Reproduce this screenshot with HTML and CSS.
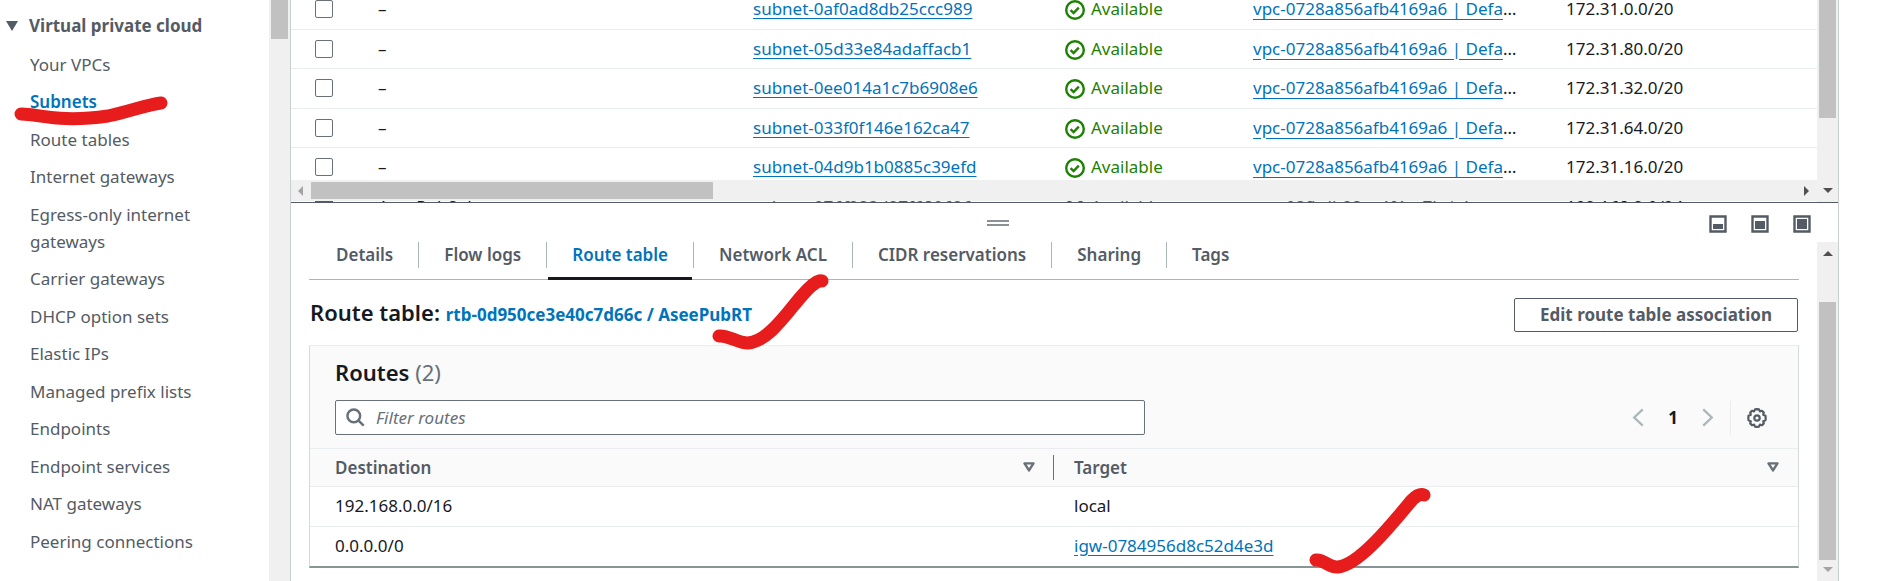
FILE: index.html
```
<!DOCTYPE html>
<html lang="en">
<head>
<meta charset="utf-8">
<title>Subnets | VPC Console</title>
<link rel="stylesheet" href="styles.css">
</head>
<body>
<svg class="defs" aria-hidden="true">
  <symbol id="i-ok" viewBox="0 0 20 20"><circle cx="10" cy="10" r="8.8" fill="none" stroke="currentColor" stroke-width="2.4"/><path d="M5.6 10.2l3 2.9 5.2-5.4" fill="none" stroke="currentColor" stroke-width="2.4"/></symbol>
  <symbol id="i-sort" viewBox="0 0 12 10"><path d="M1.5 1.4h9L6 8.4z" fill="none" stroke="currentColor" stroke-width="2.4" stroke-linejoin="round"/></symbol>
</svg>
<div class="app">
  <nav class="side">
    <div class="side-body">
      <h3 class="side-title"><span class="caret"></span>Virtual private cloud</h3>
      <ul class="side-list">
        <li><a href="#">Your VPCs</a></li>
        <li class="current"><a href="#">Subnets</a>
          <svg class="mark mark-under" viewBox="0 0 160 36"><path d="M13 20C32 20 50 29 100 22C120 18 138 11 153 9"/></svg></li>
        <li><a href="#">Route tables</a></li>
        <li><a href="#">Internet gateways</a></li>
        <li><a href="#">Egress-only internet gateways</a></li>
        <li><a href="#">Carrier gateways</a></li>
        <li><a href="#">DHCP option sets</a></li>
        <li><a href="#">Elastic IPs</a></li>
        <li><a href="#">Managed prefix lists</a></li>
        <li><a href="#">Endpoints</a></li>
        <li><a href="#">Endpoint services</a></li>
        <li><a href="#">NAT gateways</a></li>
        <li><a href="#">Peering connections</a></li>
      </ul>
    </div>
    <div class="vbar"><span class="thumb thumb-side"></span></div>
  </nav>

  <main class="main">
    <section class="subnets">
      <div class="subnets-view">
        <table class="grid">
          <colgroup><col class="c-check"><col class="c-name"><col class="c-id"><col class="c-state"><col class="c-vpc"><col></colgroup>
          <tbody>
            <tr><td><input type="checkbox" aria-label="Select subnet-0af0ad8db25ccc989"></td><td>–</td><td><a href="#">subnet-0af0ad8db25ccc989</a></td><td class="ok"><svg><use href="#i-ok"/></svg>Available</td><td class="vpc"><a href="#">vpc-0728a856afb4169a6 | DefaultVPC</a></td><td>172.31.0.0/20</td></tr>
            <tr><td><input type="checkbox" aria-label="Select subnet-05d33e84adaffacb1"></td><td>–</td><td><a href="#">subnet-05d33e84adaffacb1</a></td><td class="ok"><svg><use href="#i-ok"/></svg>Available</td><td class="vpc"><a href="#">vpc-0728a856afb4169a6 | DefaultVPC</a></td><td>172.31.80.0/20</td></tr>
            <tr><td><input type="checkbox" aria-label="Select subnet-0ee014a1c7b6908e6"></td><td>–</td><td><a href="#">subnet-0ee014a1c7b6908e6</a></td><td class="ok"><svg><use href="#i-ok"/></svg>Available</td><td class="vpc"><a href="#">vpc-0728a856afb4169a6 | DefaultVPC</a></td><td>172.31.32.0/20</td></tr>
            <tr><td><input type="checkbox" aria-label="Select subnet-033f0f146e162ca47"></td><td>–</td><td><a href="#">subnet-033f0f146e162ca47</a></td><td class="ok"><svg><use href="#i-ok"/></svg>Available</td><td class="vpc"><a href="#">vpc-0728a856afb4169a6 | DefaultVPC</a></td><td>172.31.64.0/20</td></tr>
            <tr><td><input type="checkbox" aria-label="Select subnet-04d9b1b0885c39efd"></td><td>–</td><td><a href="#">subnet-04d9b1b0885c39efd</a></td><td class="ok"><svg><use href="#i-ok"/></svg>Available</td><td class="vpc"><a href="#">vpc-0728a856afb4169a6 | DefaultVPC</a></td><td>172.31.16.0/20</td></tr>
            <tr><td><input type="checkbox" checked aria-label="Select AseePubSub"></td><td>AseePubSub</td><td><a href="#">subnet-076f233d27f680626</a></td><td class="ok"><svg><use href="#i-ok"/></svg>Available</td><td class="vpc"><a href="#">vpc-03fbdb23ce4f4ac7b | AseeVPC</a></td><td>192.168.2.0/24</td></tr>
          </tbody>
        </table>
        <div class="hbar"><span class="arrow left dim"></span><span class="thumb thumb-h"></span><span class="arrow right"></span></div>
      </div>
      <div class="vbar vbar-top"><span class="thumb"></span><span class="arrow down"></span></div>
    </section>

    <section class="panel">
      <header class="panel-head">
        <span class="handle"></span>
        <div class="sizes">
          <button type="button" aria-label="Small panel"><svg viewBox="0 0 18 18"><path d="M1.5 1.5h15v15h-15z" fill="none" stroke="currentColor" stroke-width="2.4"/><path d="M4 9h10v5H4z" fill="currentColor"/></svg></button>
          <button type="button" aria-label="Medium panel"><svg viewBox="0 0 18 18"><path d="M1.5 1.5h15v15h-15z" fill="none" stroke="currentColor" stroke-width="2.4"/><path d="M4 6h10v8H4z" fill="currentColor"/></svg></button>
          <button type="button" aria-label="Full panel"><svg viewBox="0 0 18 18"><path d="M1.5 1.5h15v15h-15z" fill="none" stroke="currentColor" stroke-width="2.4"/><path d="M4 4h10v10H4z" fill="currentColor"/></svg></button>
        </div>
      </header>
      <div class="panel-row">
        <div class="panel-body">
          <div class="tabs" role="tablist">
            <button type="button" role="tab">Details</button>
            <button type="button" role="tab">Flow logs</button>
            <button type="button" role="tab" class="active" aria-selected="true">Route table</button>
            <button type="button" role="tab">Network ACL</button>
            <button type="button" role="tab">CIDR reservations</button>
            <button type="button" role="tab">Sharing</button>
            <button type="button" role="tab">Tags</button>
          </div>
          <div class="title-row">
            <h2>Route table: <a href="#">rtb-0d950ce3e40c7d66c / AseePubRT</a>
              <svg class="mark mark-rt" viewBox="0 0 120 80"><path d="M10 63C20 62 28 70 39 70C65 68 88 22 105 11Q110 7 113 8"/></svg></h2>
            <button type="button" class="btn">Edit route table association</button>
          </div>
          <div class="card">
            <div class="card-head">
              <h2>Routes <span class="count">(2)</span></h2>
              <div class="tools">
                <label class="search">
                  <svg viewBox="0 0 20 20"><circle cx="8.2" cy="8.2" r="6.7"/><path d="M13 13l5.6 5.6"/></svg>
                  <input type="text" placeholder="Filter routes" aria-label="Filter routes">
                </label>
                <div class="pager">
                  <button type="button" class="nav" aria-label="Previous page"><svg viewBox="0 0 12 20"><path d="M11 1.500L2 10l9 8.500"/></svg></button>
                  <button type="button" class="page">1</button>
                  <button type="button" class="nav" aria-label="Next page"><svg viewBox="0 0 12 20"><path d="M1 1.500L10 10l-9 8.500"/></svg></button>
                  <button type="button" class="gear" aria-label="Preferences"><svg viewBox="0 0 20 20"><path d="M10 1.200l2 .2.900 2 2.100-.6 1.800 1.800-.6 2.200 2.300 1 .2 2.200-.2 2.200-2.300 1 .6 2.200-1.800 1.800-2.100-.6-.9 2-2 .2-2-.2-.9-2-2.100.6-1.800-1.800.6-2.200-2.300-1-.2-2.200.2-2.200 2.300-1-.6-2.200L5 2.800l2.100.6.900-2z"/><circle cx="10" cy="10" r="2.700"/></svg></button>
                </div>
              </div>
            </div>
            <table class="routes">
              <thead><tr><th><span class="th">Destination<svg><use href="#i-sort"/></svg></span></th><th><span class="th">Target<svg><use href="#i-sort"/></svg></span></th></tr></thead>
              <tbody>
                <tr><td>192.168.0.0/16</td><td>local</td></tr>
                <tr><td>0.0.0.0/0</td><td><span class="marked"><a href="#">igw-0784956d8c52d4e3d</a><svg class="mark mark-igw" viewBox="0 0 130 90"><path d="M14 75C22 74 27 83 36 82C58 80 94 34 110 15Q117 8 122 10"/></svg></span></td></tr>
              </tbody>
            </table>
          </div>
        </div>
        <div class="vbar vbar-panel"><span class="arrow up"></span><span class="thumb"></span><span class="arrow down dim"></span></div>
      </div>
    </section>
  </main>
</div>
</body>
</html>
```
FILE: styles.css
```
* { box-sizing: border-box; }
body {
  margin: 0;
  background: #fff;
  color: #16191f;
  font: 17px/27px "Noto Sans", "Open Sans", sans-serif;
}
a { color: #0073bb; text-underline-offset: 3px; }
button { font: inherit; color: inherit; background: none; border: 0; padding: 0; }
h2, h3, ul { margin: 0; padding: 0; }
svg { display: block; }
.defs { position: absolute; width: 0; height: 0; }
.app { display: flex; height: 100vh; overflow: hidden; padding-right: 38px; }

/* scrollbars */
.vbar { flex: none; width: 21px; background: #f0f0f0; display: flex; flex-direction: column; align-items: center; }
.thumb { display: block; width: 17px; background: #c1c1c1; }
.thumb-side { height: 39px; }
.arrow { border: 5px solid transparent; flex: none; }
.down { border-width: 5px 5px 0; border-top-color: #505050; }
.up { border-width: 0 5px 5px; border-bottom-color: #505050; }
.left { border-width: 5px 5px 5px 0; border-right-color: #505050; }
.right { border-width: 5px 0 5px 5px; border-left-color: #505050; }
.dim.left { border-right-color: #a3a3a3; }
.dim.down { border-top-color: #a3a3a3; }

/* navigation */
.side { flex: none; width: 290px; display: flex; }
.side-body { flex: 1; color: #545b64; padding: 12px 40px 0 6px; }
.side-title { display: flex; align-items: center; gap: 11px; font-size: 17px; font-weight: 700; margin-bottom: 12px; white-space: nowrap; }
.caret { border: 6px solid transparent; border-width: 10px 6px 0; border-top-color: #545b64; }
.side-list { list-style: none; padding-left: 24px; }
.side-list li { margin-top: 10px; position: relative; }
.side-list li:nth-child(odd) { margin-top: 11px; }
.side-list a { color: #545b64; text-decoration: none; }
.side-list .current a { color: #0073bb; font-weight: 600; }
.mark { position: absolute; fill: none; stroke: #e71c1c; stroke-width: 13px; stroke-linecap: round; stroke-linejoin: round; pointer-events: none; }
.mark-under { width: 160px; height: 36px; left: -22px; top: 6px; }

/* subnet list */
.main { flex: 1; min-width: 0; display: flex; flex-direction: column; border: 1px solid #c8d0d0; border-width: 0 1px; }
.subnets { display: flex; height: 202px; flex: none; overflow: hidden; }
.subnets-view { flex: 1; min-width: 0; position: relative; overflow: hidden; display: flex; align-items: flex-end; }
.grid { width: 100%; table-layout: fixed; border-collapse: collapse; margin-bottom: -25px; }
.grid td { padding: 0 0 1px; height: 39px; line-height: 26px; border-bottom: 1px solid #eaeded; white-space: nowrap; overflow: hidden; vertical-align: middle; }
.grid tr:nth-child(odd) td { height: 40px; }
.c-check { width: 87px; }
.c-name { width: 375px; }
.c-id { width: 312px; }
.c-state { width: 188px; }
.c-vpc { width: 313px; }
.grid input { appearance: none; display: block; width: 18px; height: 18px; margin: 0 0 0 24px; border: 1px solid #687078; border-radius: 2px; background: #fff; }
.grid input:checked { background: #0073bb; border-color: #0073bb; }
.grid .vpc { text-overflow: ellipsis; padding-right: 44px; }
.vpc a { text-underline-offset: 4px; }
.ok { color: #1d8102; }
.ok svg { display: inline-block; width: 20px; height: 20px; margin-right: 6px; vertical-align: -5px; }
.hbar { position: absolute; left: 0; right: 0; bottom: 1px; height: 21px; background: #f0f0f0; display: flex; align-items: center; padding: 0 8px 0 7px; }
.thumb-h { width: 402px; height: 17px; margin: 0 auto 0 8px; }
.vbar-top .thumb { height: 118px; margin-bottom: auto; }
.vbar-top { padding-bottom: 9px; }

/* split panel */
.panel { flex: 1; display: flex; flex-direction: column; border-top: 1px solid #545b64; }
.panel-head { height: 39px; flex: none; display: grid; grid-template-columns: 5fr auto 6fr; align-items: start; padding: 12px 27px 0; }
.handle { grid-column: 2; width: 22px; height: 6px; margin-top: 5px; border: 2px solid #8b9097; border-width: 2px 0; }
.sizes { display: flex; gap: 24px; justify-content: flex-end; color: #545b64; }
.sizes svg { width: 18px; height: 18px; }
.panel-row { flex: 1; display: flex; }
.panel-body { flex: 1; min-width: 0; padding: 0 18px; }
.tabs { display: flex; border-bottom: 1px solid #aab7b8; height: 38px; padding-left: 3px; }
.tabs button { position: relative; padding: 0 24px 12px; font-weight: 600; color: #545b64; height: 38px; line-height: 26px; border-bottom: 3px solid transparent; white-space: nowrap; margin-right: 3px; }
.tabs button:not(:last-child)::after { content: ""; position: absolute; right: -2px; top: 0; height: 26px; width: 1px; background: #aab7b8; }
.tabs .active { color: #0073bb; border-bottom-color: #16191f; }
.title-row { display: flex; justify-content: space-between; align-items: flex-start; padding: 18px 1px 13px; }
h2 { font-size: 22px; font-weight: 600; position: relative; }
.title-row h2 { line-height: 28px; }
.title-row a { font-size: 17px; font-weight: 700; text-decoration: none; }
.btn { border: 1px solid #545b64; border-radius: 2px; height: 34px; padding: 0 25px 2px; font-weight: 700; color: #545b64; }
.mark-rt { width: 120px; height: 80px; right: -77px; top: -25px; }
.card { border: 1px solid #d5dbdb; border-top-color: #eaeded; border-bottom: 2px solid #879596; }
.card-head { background: #fafafa; padding: 13px 25px 13px; border-bottom: 1px solid #eaeded; }
.count { color: #687078; font-weight: 400; }
.tools { display: flex; justify-content: space-between; align-items: center; margin-top: 14px; }
.search { display: flex; align-items: center; gap: 11px; flex: 0 1 810px; height: 35px; border: 1px solid #687078; border-radius: 2px; background: #fff; padding: 0 10px; }
.search svg { width: 19px; height: 19px; fill: none; stroke: #687078; stroke-width: 2.6px; }
.search input { flex: 1; border: 0; outline: 0; padding: 0; font: inherit; background: none; }
.search input::placeholder { font-style: italic; color: #687078; opacity: 1; }
.pager { display: flex; align-items: center; margin-right: 6px; }
.nav svg { width: 12px; height: 19px; fill: none; stroke: #aab7b8; stroke-width: 2.4px; }
.page { width: 58px; font-weight: 700; }
.gear { border-left: 1px solid #eaeded; margin-left: 16px; padding: 7px 0 7px 16px; color: #545b64; }
.gear svg { width: 20px; height: 20px; fill: none; stroke: currentColor; stroke-width: 2.2px; stroke-linejoin: round; }
.routes { width: 100%; border-collapse: collapse; table-layout: fixed; }
.routes th { width: 50%; height: 37px; padding: 0 19px 0 20px; text-align: left; font-weight: 600; color: #545b64; background: #fafafa; border-bottom: 1px solid #eaeded; }
.routes th:first-child, .routes td:first-child { padding-left: 25px; }
.routes th:first-child { padding-right: 0; }
.th { display: flex; justify-content: space-between; align-items: center; }
.th svg { width: 12px; height: 10px; color: #687078; }
.routes th:first-child .th { border-right: 1px solid #687078; padding-right: 18px; line-height: 25px; }
.routes td { height: 40px; padding: 0 20px 2px; border-bottom: 1px solid #eaeded; }
.routes tr:last-child td { border-bottom: 0; }
.marked { position: relative; }
.mark-igw { width: 130px; height: 90px; left: 228px; top: -49px; }
.vbar-panel { padding: 9px 0; }
.vbar-panel .thumb { margin: 46px 0 auto; height: 258px; }
```
